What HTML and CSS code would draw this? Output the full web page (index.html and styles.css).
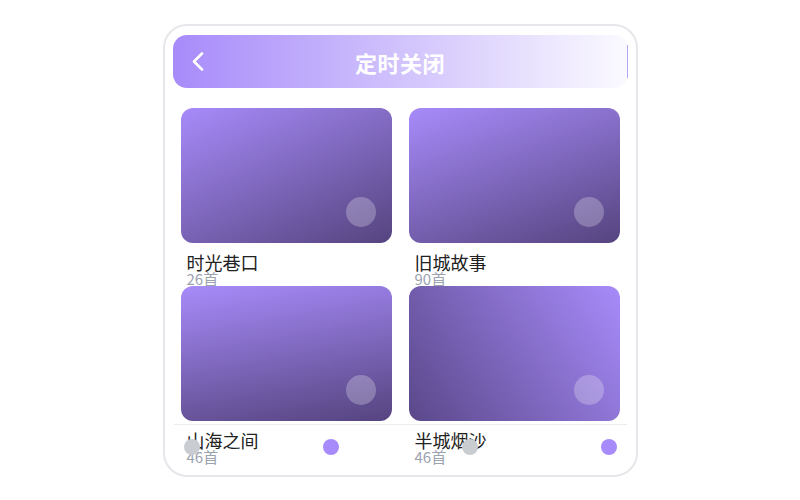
FILE: index.html
```html
<!DOCTYPE html>
<html lang="zh-CN">
<head>
  <meta charset="UTF-8" />
  <title>定时关闭</title>
  <meta name="viewport" content="width=device-width, initial-scale=1.0" />
  <link rel="stylesheet" href="styles.css">
</head>
<body>
  <div class="phone">
    <div class="topbar">
      <svg class="back" width="12" height="19" viewBox="0 0 12 19">
        <polyline points="10,1.5 2,9.5 10,17.5" fill="none" stroke="#fff" stroke-width="2.6" stroke-linecap="round" stroke-linejoin="round"/>
      </svg>
      <div class="title">定时关闭</div>
      <span class="spacer"></span>
    </div>

    <div class="grid">
      <div class="album">
        <div class="cover c1"><span class="play"></span></div>
        <div class="name">时光巷口</div>
        <div class="count">26首</div>
      </div>
      <div class="album">
        <div class="cover c2"><span class="play"></span></div>
        <div class="name">旧城故事</div>
        <div class="count">90首</div>
      </div>
      <div class="album">
        <div class="cover c3"><span class="play"></span></div>
        <div class="name">山海之间</div>
        <div class="count">46首</div>
      </div>
      <div class="album">
        <div class="cover c4"><span class="play"></span></div>
        <div class="name">半城烟沙</div>
        <div class="count">46首</div>
      </div>
    </div>

    <!-- mini player strip -->
    <div class="player">
      <span class="dot gray"></span>
      <span class="dot purple"></span>
      <span class="dot gray"></span>
      <span class="dot purple"></span>
    </div>
  </div>
</body>
</html>
```

FILE: styles.css
```css
:root {
  --purple: #a78bfa;
  --dark: #55447f;
  --text: #222;
  --muted: #9ca3af;
}
* {
  box-sizing: border-box;
}
body {
  margin: 0;
  background: #fff;
  font-family: "Noto Sans CJK SC", "Noto Sans", sans-serif;
}
.phone {
  position: relative;
  width: 475px;
  height: 453px;
  margin: 24px auto 0;
  border: 2px solid #e6e6eb;
  border-radius: 24px;
  background: #fff;
  overflow: hidden;
  padding-top: 9px;
}
.topbar {
  position: relative;
  display: flex;
  align-items: center;
  height: 53px;
  margin: 0 8px;
  padding: 0 19px;
  border-radius: 14px;
  background: linear-gradient(to right, var(--purple), #fbfaff);
}
.topbar::after {
  content: "";
  position: absolute;
  right: 0;
  top: 10px;
  bottom: 10px;
  width: 1px;
  background: #b9a4fc;
}
.back {
  display: block;
  flex: none;
}
.spacer {
  width: 12px;
  flex: none;
}
.title {
  flex: 1;
  text-align: center;
  color: #fff;
  font-size: 22px;
  font-weight: bold;
  letter-spacing: 0.5px;
}
.grid {
  display: grid;
  grid-template-columns: 1fr 1fr;
  grid-auto-rows: 178px;
  column-gap: 17px;
  margin: 20px 9px 0;
  padding: 0 7px;
}
.album {
  min-width: 0;
}
.cover {
  position: relative;
  height: 135px;
  border-radius: 12px;
  background: linear-gradient(155deg, var(--purple), var(--dark));
}
.c2 {
  background: linear-gradient(160deg, var(--purple), var(--dark));
}
.c3 {
  background: linear-gradient(170deg, var(--purple), var(--dark));
}
.c4 {
  background: linear-gradient(235deg, var(--purple), #5a488a);
}
.play {
  position: absolute;
  right: 16px;
  bottom: 16px;
  width: 30px;
  height: 30px;
  border-radius: 50%;
  background: rgba(255, 255, 255, 0.25);
}
.name {
  margin: 10px 0 0 6px;
  font-size: 18px;
  line-height: 18px;
  color: var(--text);
}
.count {
  margin-left: 6px;
  font-size: 15px;
  line-height: 15px;
  color: var(--muted);
}
.player {
  position: absolute;
  left: 9px;
  right: 9px;
  top: 398px;
  display: flex;
  justify-content: space-between;
  padding: 14px 10px;
  border-top: 1px solid #ececf0;
}
.dot {
  width: 16px;
  height: 16px;
  border-radius: 50%;
}
.gray {
  background: #c9cdd2;
}
.purple {
  background: var(--purple);
}
```
